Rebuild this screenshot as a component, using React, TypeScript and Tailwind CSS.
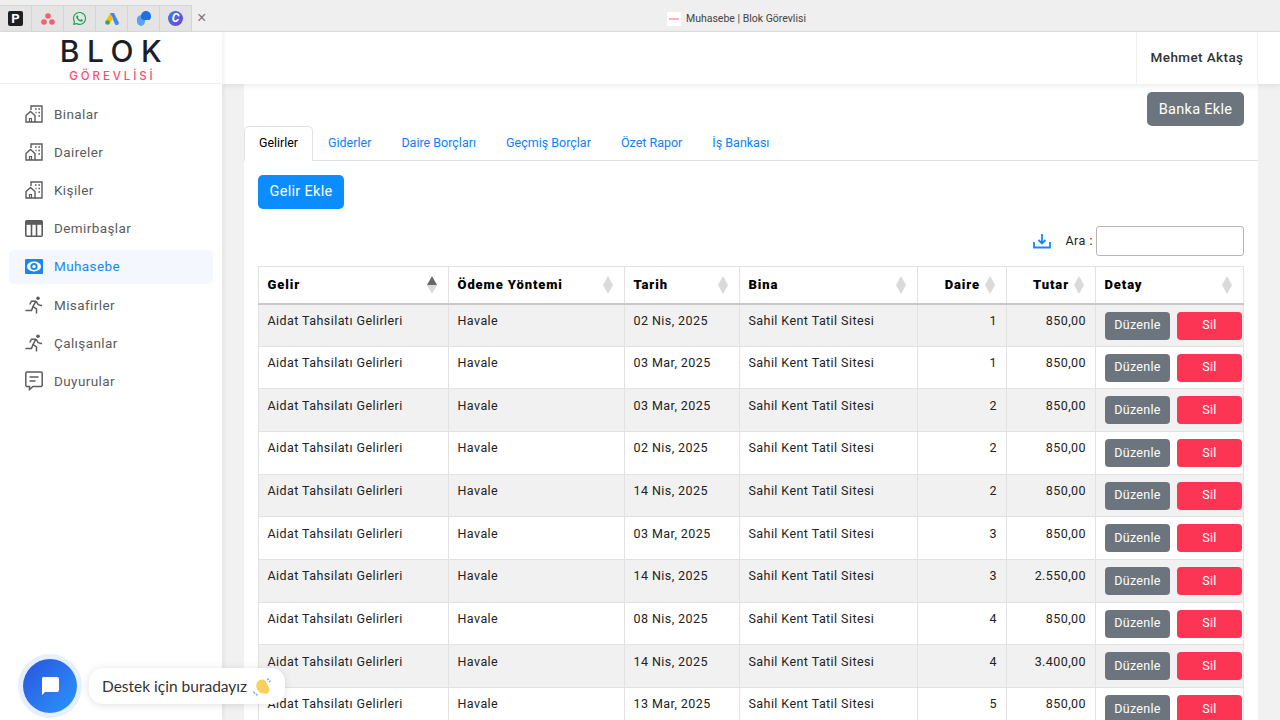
import React from "react";
import { FaWhatsapp } from "react-icons/fa";

const BuildingIcon = () => (
  <svg width="18" height="18" viewBox="0 0 18 18" fill="none" stroke="currentColor" strokeWidth="1.400" className="shrink-0">
    <path d="M6 5V1h11v16H10" />
    <path d="M1 10.500 5.500 6.500 10 10.500V17H1Z" fill="white" />
    <path d="M4.500 17v-3.500h2V17" strokeWidth="1.200" />
    <path d="M10 4h1.600M13.400 4H15M13.400 7.500H15M13.400 11H15M10.500 7.500h1.100" strokeWidth="1.500" />
  </svg>
);

const TableIcon = () => (
  <svg width="18" height="17" viewBox="0 0 18 17" fill="none" className="shrink-0">
    <rect x=".8" y=".8" width="16.400" height="15.400" rx="1" stroke="currentColor" strokeWidth="1.600" />
    <rect x=".8" y=".8" width="16.400" height="4" fill="currentColor" />
    <path d="M6.500 4v12M11.500 4v12" stroke="currentColor" strokeWidth="1.600" />
  </svg>
);

const MoneyIcon = () => (
  <svg width="18" height="15" viewBox="0 0 18 15" className="shrink-0">
    <rect width="18" height="15" rx="1" fill="currentColor" />
    <ellipse cx="9" cy="7.500" rx="7" ry="5" fill="white" />
    <circle cx="9" cy="7.500" r="3.600" fill="currentColor" />
    <circle cx="9" cy="7.500" r="1.700" fill="white" />
  </svg>
);

const RunIcon = () => (
  <svg width="18" height="18" viewBox="0 0 18 18" fill="none" stroke="currentColor" strokeWidth="1.500" className="shrink-0">
    <circle cx="13" cy="2.200" r="1.800" fill="currentColor" stroke="none" />
    <path d="M11 5.200 8 10.500l3.500 2.500v4.500" />
    <path d="M11 5.200H6.500L4.700 8.500" />
    <path d="M11 5.200l2.200 3.500 3.800 1" />
    <path d="M8 10.500 6.500 14.500H.5" />
  </svg>
);

const NoticeIcon = () => (
  <svg width="18" height="20" viewBox="0 0 18 20" fill="none" stroke="currentColor" strokeWidth="1.500" className="shrink-0">
    <path d="M2 1h14a1.200 1.200 0 0 1 1.200 1.200v12a1.200 1.200 0 0 1-1.200 1.200H8L4.500 18.500v-3.100H2a1.200 1.200 0 0 1-1.200-1.200v-12A1.200 1.200 0 0 1 2 1Z" />
    <path d="M4.500 6h9M4.500 10h6" />
  </svg>
);

const nav = [
  { label: "Binalar", icon: <BuildingIcon /> },
  { label: "Daireler", icon: <BuildingIcon /> },
  { label: "Kişiler", icon: <BuildingIcon /> },
  { label: "Demirbaşlar", icon: <TableIcon /> },
  { label: "Muhasebe", icon: <MoneyIcon />, active: true },
  { label: "Misafirler", icon: <RunIcon /> },
  { label: "Çalışanlar", icon: <RunIcon /> },
  { label: "Duyurular", icon: <NoticeIcon /> },
];

const favicons = [
  <span className="w-[15px] h-[15px] rounded-[2px] bg-[#1e1e24] text-white text-[13px] leading-[15px] font-bold text-center">P</span>,
  <svg width="14" height="12" viewBox="0 0 14 12" fill="#f0626c"><circle cx="7" cy="3" r="2.800" /><circle cx="3" cy="9" r="2.800" /><circle cx="11" cy="9" r="2.800" /></svg>,
  <FaWhatsapp size={15} className="text-[#12a150]" />,
  <svg width="14" height="13" viewBox="0 0 14 13"><path d="M5 1 9 1 13.500 10a2 2 0 0 1-3.500 2Z" fill="#4285f4" /><path d="M5 1.500 8 6 4.500 12 .5 9.500Z" fill="#fbbc04" /><circle cx="2.500" cy="10.500" r="2.300" fill="#34a853" /></svg>,
  <svg width="16" height="15" viewBox="0 0 16 15"><path d="M1 7a5 5 0 0 1 4-3h4v6a5 5 0 0 1-3.500 5A4.500 4.500 0 0 1 1 10Z" fill="#5aa2f5" /><path d="M5 5a5 5 0 0 1 10 0 4 4 0 0 1-1.500 4H8a3.500 3.500 0 0 1-3-4Z" fill="#1e6fe0" /></svg>,
  <span className="w-[15px] h-[15px] rounded-full bg-gradient-to-br from-[#2f7bef] to-[#6a3fd4] text-white text-[12px] leading-[15px] italic font-bold text-center">C</span>,
];

const tabs = ["Gelirler", "Giderler", "Daire Borçları", "Geçmiş Borçlar", "Özet Rapor", "İş Bankası"];

const columns = [
  { label: "Gelir", width: "w-[190px]", active: true },
  { label: "Ödeme Yöntemi", width: "w-[176px]" },
  { label: "Tarih", width: "w-[115px]" },
  { label: "Bina", width: "w-[178px]" },
  { label: "Daire", width: "w-[89px]", right: true },
  { label: "Tutar", width: "w-[89px]", right: true },
  { label: "Detay", width: "w-[148px]" },
];

const rows = [
  ["02 Nis, 2025", "1", "850,00"],
  ["03 Mar, 2025", "1", "850,00"],
  ["03 Mar, 2025", "2", "850,00"],
  ["02 Nis, 2025", "2", "850,00"],
  ["14 Nis, 2025", "2", "850,00"],
  ["03 Mar, 2025", "3", "850,00"],
  ["14 Nis, 2025", "3", "2.550,00"],
  ["08 Nis, 2025", "4", "850,00"],
  ["14 Nis, 2025", "4", "3.400,00"],
  ["13 Mar, 2025", "5", "850,00"],
];

const SortIcon = ({ active }: { active?: boolean }) => (
  <svg width="10" height="18" viewBox="0 0 10 18" className="absolute right-[11px] top-[9px]">
    <path d="M5 18 10 9H0Z" fill="#dadada" />
    <path d="M5 0 10 9H0Z" fill={active ? "#666666" : "#dadada"} />
  </svg>
);

const cell = "border border-[#e2e2e2] pl-[8.500px] pr-[9px] pt-[7.500px] align-top font-normal";

export default function App() {
  return (
    <div className="h-screen w-[1280px] overflow-hidden flex flex-col bg-[#f1f1f1] text-black font-['Roboto',sans-serif]">
      {/* browser tabs */}
      <div className="h-[32px] shrink-0 flex items-end bg-[#efefef] border-b border-[#dedede] relative">
        <div className="flex h-[26px]">
          {favicons.map((icon, i) => (
            <div key={i} className="w-[32px] flex items-center justify-center border-r border-t border-[#d4d4d4] bg-[#e4e4e4]">
              {icon}
            </div>
          ))}
        </div>
        <span className="ml-[5px] h-[26px] leading-[25px] text-[16px] text-[#777777] font-['Liberation_Sans',sans-serif]">×</span>
        <div className="absolute left-[667px] top-[12px] flex items-center gap-[5px]">
          <span className="w-[14px] h-[14px] bg-white flex items-center justify-center">
            <span className="w-[10px] h-[2px] bg-[#ffb3bd]"></span>
          </span>
          <span className="text-[10.500px] leading-[14px] text-[#444444]">Muhasebe | Blok Görevlisi</span>
        </div>
      </div>

      <div className="flex flex-1 min-h-0">
        {/* sidebar */}
        <aside className="w-[222px] shrink-0 bg-white flex flex-col shadow-[2px_0_4px_rgba(0,0,0,0.06)] z-20">
          <div className="h-[52px] shrink-0 flex flex-col items-center border-b border-[#eeeeee]">
            <div className="text-[30px] leading-[26px] mt-[6px] font-medium tracking-[7.500px] pl-[7px] text-[#1c1f2b] font-['Inter',sans-serif]">BLOK</div>
            <div className="text-[11.500px] leading-[12px] mt-[6px] tracking-[2.900px] pl-[3px] font-medium text-[#ff4d6a] font-['Inter',sans-serif]">GÖREVLİSİ</div>
          </div>
          <nav className="flex flex-col gap-[4.150px] pt-[13px] pl-[9px] pr-[9px]">
            {nav.map((item) => (
              <div
                key={item.label}
                className={`h-[34px] rounded-[5px] flex items-center pl-[16px] ${item.active ? "bg-[#f4f8fe] text-[#1a86f5]" : "text-[#5c5c5c]"}`}
              >
                <span className="w-[29px] flex items-center">{item.icon}</span>
                <span className="text-[13.500px] tracking-[0.4px]">{item.label}</span>
              </div>
            ))}
          </nav>
        </aside>

        <main className="flex-1 min-w-0 flex flex-col">
          {/* header */}
          <header className="h-[52px] shrink-0 bg-white flex justify-end pr-[22px] shadow-[0_2px_6px_rgba(0,0,0,0.08)] z-10">
            <div className="w-[122px] pb-[2px] border-x border-[#f0f0f0] flex items-center justify-center text-[13.500px] font-medium tracking-[0.4px] text-[#333333]">
              Mehmet Aktaş
            </div>
          </header>

          {/* card */}
          <section className="ml-[22px] mr-[22px] bg-white flex-1 min-h-0 overflow-hidden">
            <div className="flex justify-end pt-[8px] pr-[14px]">
              <button className="h-[34px] w-[97px] pt-[1px] rounded-[5px] bg-[#6c757d] text-white text-[14.500px] tracking-[0.3px]">Banka Ekle</button>
            </div>
            <div className="flex h-[35px] border-b border-[#dee2e6]">
              {tabs.map((t, i) => (
                <div
                  key={t}
                  className={
                    i === 0
                      ? "h-[35px] w-[69px] pl-[14px] flex items-center text-[12.400px] bg-white text-black border border-b-white border-[#dee2e6] rounded-t-[5px]"
                      : "h-[35px] px-[15px] flex items-center text-[12.500px] text-[#0d7ffb]"
                  }
                >
                  {t}
                </div>
              ))}
            </div>
            <div className="px-[14px] pt-[14px]">
              <button className="h-[34px] w-[86px] rounded-[5px] bg-[#0b8cff] text-white text-[14.500px] tracking-[0.3px]">Gelir Ekle</button>
              <div className="flex justify-end items-center mt-[17px] h-[30px]">
                <svg width="18" height="16" viewBox="0 0 18 16" fill="none" stroke="#1a86f5" strokeWidth="1.800" className="mr-[14px]">
                  <path d="M1 9v5.500h16V9" />
                  <path d="M9 1v9M5.500 7 9 10.500 12.500 7" />
                </svg>
                <span className="text-[12.500px] tracking-[0.5px] text-[#222222] mr-[3px]">Ara :</span>
                <input className="w-[148px] h-[30px] bg-white border border-[#b5b5b5] rounded-[3px]" />
              </div>
              <table className="mt-[10px] w-[985px] table-fixed border-collapse text-[12.500px] tracking-[0.43px] text-[#222222]">
                <thead>
                  <tr className="h-[37px]">
                    {columns.map((c) => (
                      <th
                        key={c.label}
                        className={`relative border border-[#e2e2e2] border-b-2 border-b-[#c8c8c8] pl-[8.500px] text-[13px] font-black text-black tracking-[0.9px] ${c.width} ${c.right ? "text-right pr-[26px]" : "text-left"}`}
                      >
                        {c.label}
                        <SortIcon active={c.active} />
                      </th>
                    ))}
                  </tr>
                </thead>
                <tbody>
                  {rows.map((r, i) => (
                    <tr key={i} className={`h-[42.670px] ${i % 2 === 0 ? "bg-[#f1f1f1]" : "bg-white"}`}>
                      <td className={cell}>Aidat Tahsilatı Gelirleri</td>
                      <td className={cell}>Havale</td>
                      <td className={cell}>{r[0]}</td>
                      <td className={cell}>Sahil Kent Tatil Sitesi</td>
                      <td className={`${cell} text-right`}>{r[1]}</td>
                      <td className={`${cell} text-right`}>{r[2]}</td>
                      <td className="border border-[#e2e2e2] pl-[9px] pt-[7px] align-top">
                        <div className="flex gap-[7px]">
                          <button className="w-[65px] h-[28px] rounded-[4px] bg-[#6c757d] text-white text-[12.500px] tracking-[0.3px]">Düzenle</button>
                          <button className="w-[65px] h-[28px] rounded-[4px] bg-[#fd3554] text-white text-[12.500px] tracking-[0.3px]">Sil</button>
                        </div>
                      </td>
                    </tr>
                  ))}
                </tbody>
              </table>
            </div>
          </section>
        </main>
      </div>

      {/* support widget */}
      <div className="absolute left-[23px] top-[659px] w-[54px] h-[54px] rounded-full bg-gradient-to-br from-[#2a52de] to-[#2b96fb] shadow-[0_0_0_5px_rgba(60,120,255,0.12)] flex items-center justify-center z-30">
        <svg width="20" height="20" viewBox="0 0 20 20" fill="white">
          <path d="M3 1h14a2 2 0 0 1 2 2v11a2 2 0 0 1-2 2H5l-3 3V3a2 2 0 0 1 1-2Z" />
        </svg>
      </div>
      <div className="absolute left-[89px] top-[668px] w-[196px] h-[36px] pt-[1px] rounded-[14px] bg-white shadow-[0_1px_8px_rgba(0,0,0,0.12)] flex items-center pl-[13px] gap-[5px] z-30 font-['Lato',sans-serif] text-[15.500px] text-[#333333]">
        Destek için buradayız
        <svg width="20" height="20" viewBox="0 0 20 20" fill="none">
          <path d="M4.500 6.500C6 3 10 1.500 12.500 3c1.500 1 3 5 4.500 8 1 2.500 0 5-2 5.500-3.500 1-7.500-.5-9.500-3.500-1.200-2-1.500-4.500-1-6.500Z" fill="#fbcf5c" />
          <path d="M15 3l2-1.500M17 5l1.500-1.500M1.500 14.500l1.500 2.500M4 17l1.500 1.500" stroke="#7aa7f0" strokeWidth="1.300" />
        </svg>
      </div>
    </div>
  );
}
